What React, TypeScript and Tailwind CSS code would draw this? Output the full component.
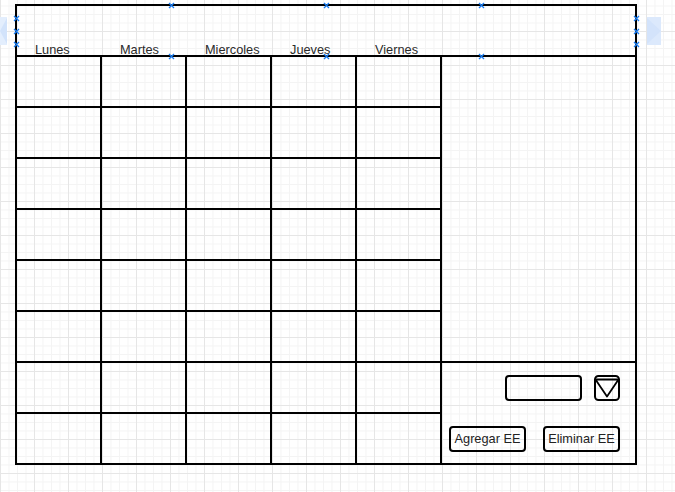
import React from "react";

const days = ["Lunes", "Martes", "Miercoles", "Jueves", "Viernes"];

// connection points of the selected header shape (draw.io style)
const markers = [
  [16, 18], [16, 31], [16, 44],
  [171, 5], [326, 5], [481, 5],
  [171, 56], [326, 56], [481, 56],
  [636, 18], [636, 31], [636, 44],
];

function Marker({ x, y }: { x: number; y: number }) {
  return (
    <svg
      width="7"
      height="7"
      viewBox="0 0 7 7"
      className="absolute pointer-events-none"
      style={{ left: x - 3.5, top: y - 3.5 }}
    >
      <path d="M1 1 L6 6 M6 1 L1 6" stroke="#1a7cf0" strokeWidth="1.3" />
    </svg>
  );
}

export default function App() {
  const cells = Array.from({ length: 40 }, (_, i) => i);

  return (
    <div
      className="relative w-full min-h-screen overflow-hidden bg-white font-['Liberation_Sans',Arial,sans-serif] bg-[linear-gradient(to_right,#e6e6e6_1px,transparent_1px),linear-gradient(to_bottom,#e6e6e6_1px,transparent_1px),linear-gradient(to_right,#f4f4f4_1px,transparent_1px),linear-gradient(to_bottom,#f4f4f4_1px,transparent_1px)] bg-[size:34px_34px,34px_34px,8.5px_8.5px,8.5px_8.5px] bg-[position:0_31px,0_31px,0_5.5px,0_5.5px]"
    >
      {/* hover arrows */}
      <svg width="7" height="28" viewBox="0 0 7 28" className="absolute left-0 top-[17px]">
        <rect x="0" y="0" width="7" height="28" fill="#e3eefd" />
        <polygon points="7,1 7,27 0,14" fill="#d2e3fb" />
      </svg>
      <svg width="14" height="28" viewBox="0 0 14 28" className="absolute left-[647px] top-[17px]">
        <rect x="0" y="0" width="14" height="28" fill="#dce9fc" />
        <polygon points="0,1 0,27 14,14" fill="#d3e3fb" />
      </svg>

      <div className="ml-[15px] pt-[4px]">
        <div className="w-[622px] h-[461px] border-2 border-black flex flex-col">
          {/* header */}
          <div className="h-[51px] shrink-0 border-b-2 border-black grid grid-cols-[repeat(5,85px)]">
            {days.map((d) => (
              <div key={d} className="pl-[18px] pt-[38px] text-[12.75px] leading-none text-[#2b2b2b]">
                {d}
              </div>
            ))}
          </div>

          {/* body */}
          <div className="flex flex-1">
            <div className="grid grid-cols-[repeat(5,85px)] grid-rows-[repeat(7,51px)_49px]">
              {cells.map((i) => (
                <div
                  key={i}
                  className={`border-r-2 border-black ${i < 35 ? "border-b-2" : ""}`}
                />
              ))}
            </div>

            <div className="flex-1 flex flex-col">
              <div className="h-[306px] shrink-0 border-b-2 border-black" />
              <div className="flex-1 flex flex-col">
                <div className="flex justify-end items-center gap-[12px] pt-[12px] pr-[15px]">
                  <div className="w-[77px] h-[26px] border-2 border-black rounded-[4px]" />
                  <svg width="26" height="26" viewBox="0 0 26 26">
                    <rect x="1" y="1" width="24" height="24" rx="3.5" fill="none" stroke="#000" strokeWidth="2" />
                    <polygon points="1.5,4.5 24.5,4.5 13,21.5" fill="none" stroke="#000" strokeWidth="1.8" strokeLinejoin="round" />
                  </svg>
                </div>
                <div className="flex gap-[17px] pt-[25px] pl-[7px]">
                  <button className="w-[77px] h-[26px] border-2 border-black rounded-[4px] text-[12.75px] leading-none text-[#222] flex items-center justify-center">
                    Agregar EE
                  </button>
                  <button className="w-[77px] h-[26px] border-2 border-black rounded-[4px] text-[12.75px] leading-none text-[#222] flex items-center justify-center">
                    Eliminar EE
                  </button>
                </div>
              </div>
            </div>
          </div>
        </div>
      </div>

      {markers.map(([x, y], i) => (
        <Marker key={i} x={x} y={y} />
      ))}
    </div>
  );
}
